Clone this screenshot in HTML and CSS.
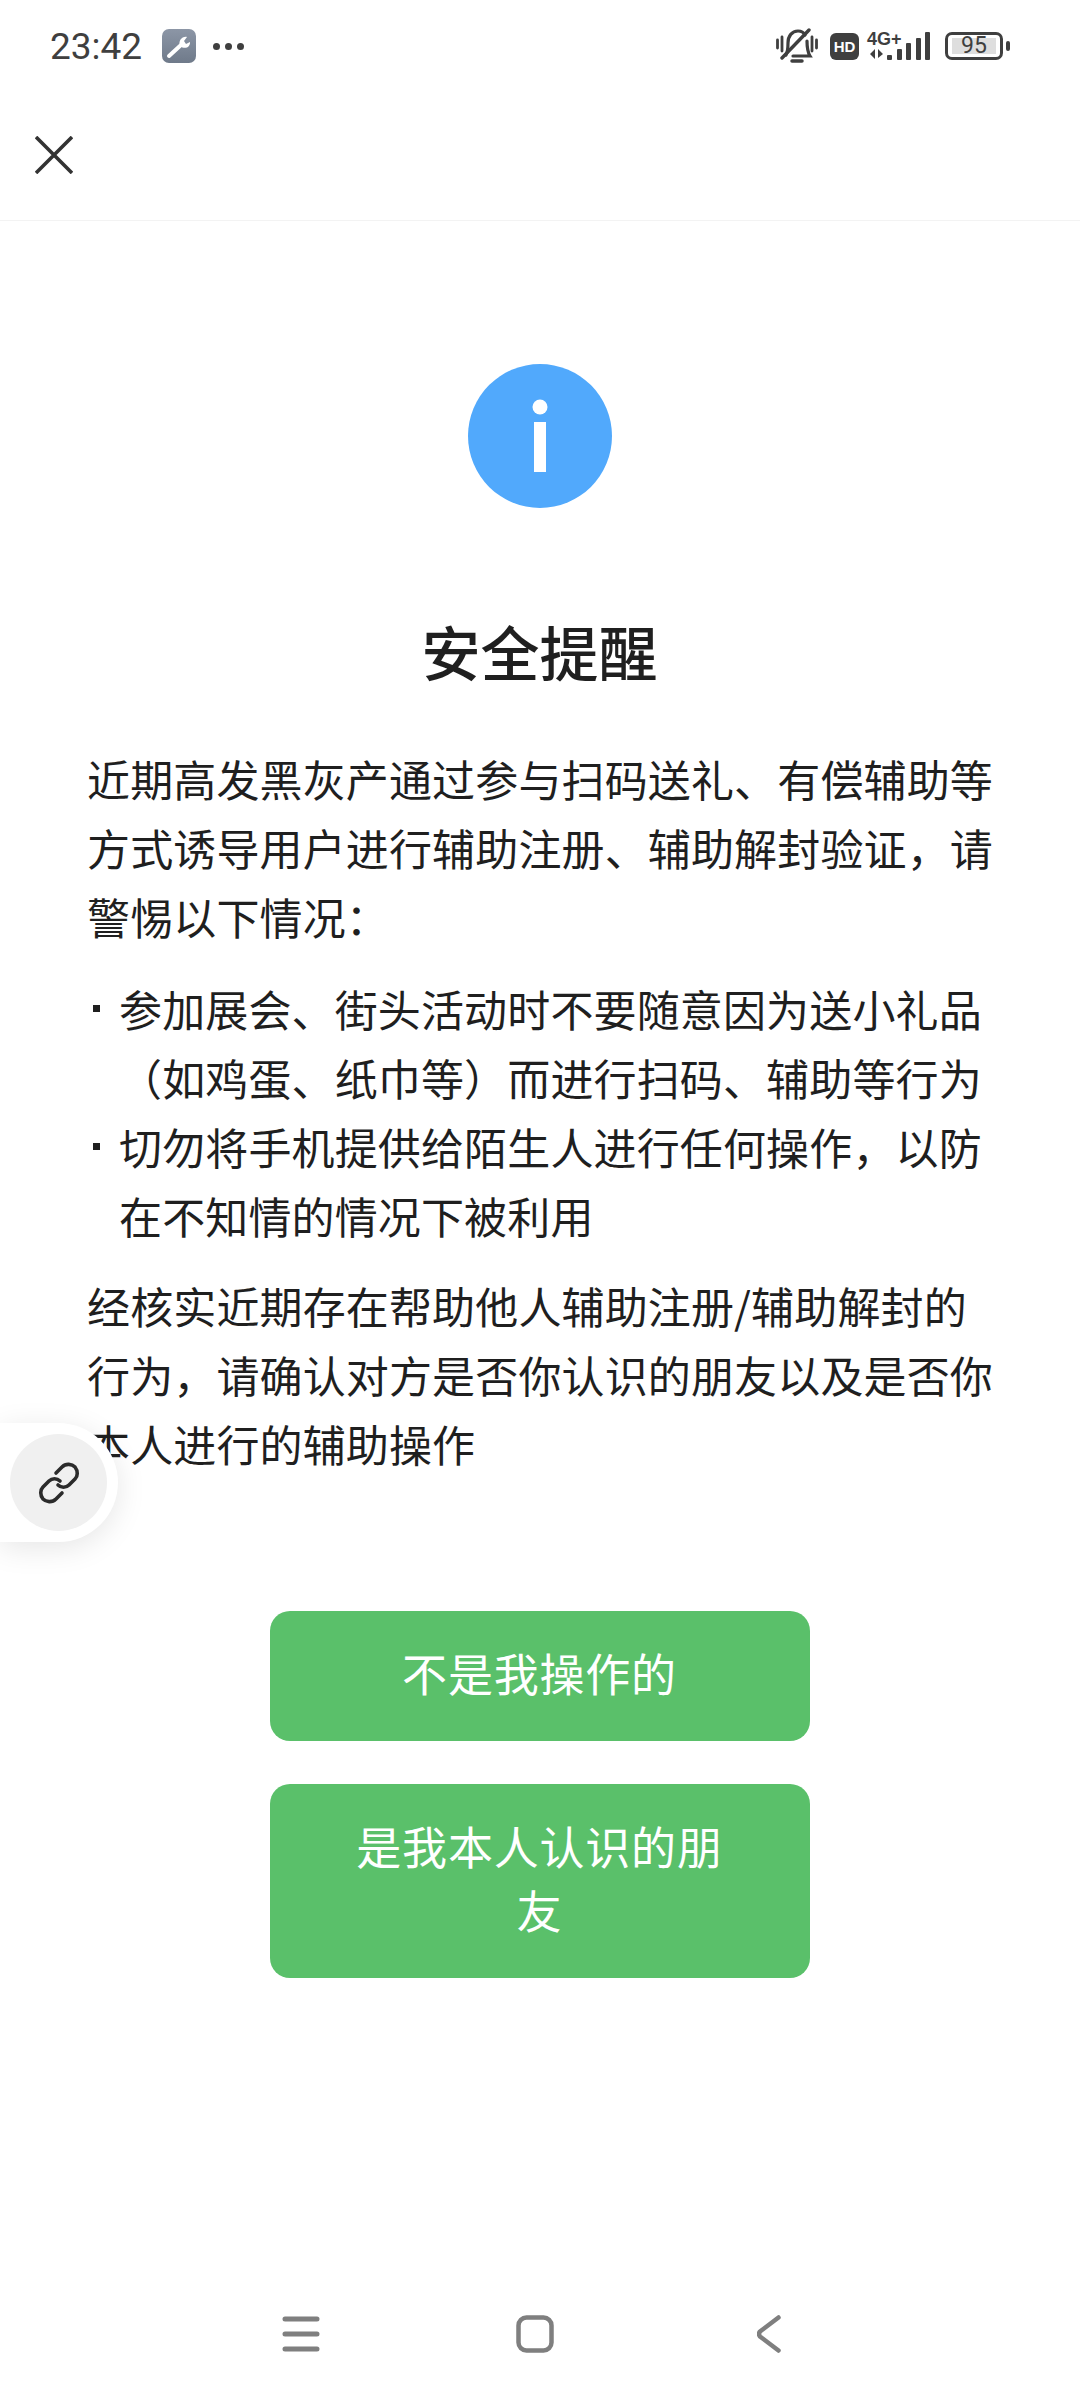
FILE: index.html
```html
<!DOCTYPE html>
<html lang="zh-CN">
<head>
    <meta charset="utf-8">
    <title>安全提醒</title>
    <link rel="stylesheet" href="styles.css">
</head>
<body>
    <div class="page">
        <div class="status-bar">
            <span class="time">23:42</span>
            <svg class="wrench" width="34" height="34" viewBox="0 0 34 34">
                <defs>
                    <linearGradient id="wrenchBg" x1="0" y1="0" x2="0" y2="1">
                        <stop offset="0" stop-color="#8c96a6"/>
                        <stop offset="1" stop-color="#6f7a8a"/>
                    </linearGradient>
                </defs>
                <rect width="34" height="34" rx="7" fill="url(#wrenchBg)"/>
                <path d="M7 27 L19 16" stroke="#fff" stroke-width="4" stroke-linecap="round"/>
                <path d="M18 17 C16 12 20 7 25 8 L22 12 L24 15 L28 13 C28.500 18 23 21 18 17 Z" fill="#fff"/>
            </svg>
            <span class="dots"><i></i><i></i><i></i></span>
            <span class="status-right">
                <svg class="bell" width="42" height="36" viewBox="0 0 42 36" fill="none" stroke="#3f3f3f" stroke-linecap="round">
                    <path d="M1.500 12 V20 M6 9 V23 M36 9 V23 M40.500 12 V20" stroke-width="2.800"/>
                    <path d="M10 27 C12 23 12 19 12 15 C12 8 16 3 22 3 C25 3 28 5 29 7 M31 13 C31 19 31 23 34 28 H17" stroke-width="3.200"/>
                    <path d="M16 33 H26" stroke-width="3.500"/>
                    <path d="M6 30 L33 2" stroke-width="3.400"/>
                </svg>
                <span class="hd">HD</span>
                <span class="network">
                    <span class="net-label">4G+</span>
                    <svg width="62" height="28" viewBox="0 0 62 28" fill="#3f3f3f">
                        <path d="M1 22 L6 17 V27 Z M9 17 L14 22 L9 26 Z"/>
                        <rect x="18" y="23" width="5" height="5" rx="1"/>
                        <rect x="28" y="17" width="5" height="11" rx="1"/>
                        <rect x="37" y="11" width="5" height="17" rx="1"/>
                        <rect x="47" y="6" width="5" height="22" rx="1"/>
                        <rect x="56" y="0" width="5" height="28" rx="1"/>
                    </svg>
                </span>
                <span class="battery"><span class="battery-level">95</span></span>
                <span class="battery-tip"></span>
            </span>
        </div>

        <div class="top-bar">
            <svg width="38" height="38" viewBox="0 0 38 38" stroke="#333" stroke-width="3.600" fill="none">
                <path d="M1 1 L37 37 M37 1 L1 37"/>
            </svg>
        </div>

        <div class="content">
            <svg class="info-icon" width="144" height="144" viewBox="0 0 144 144">
                <circle cx="72" cy="72" r="72" fill="#51a9fc"/>
                <circle cx="72" cy="43" r="7.500" fill="#fff"/>
                <rect x="66" y="58" width="12" height="50" fill="#fff"/>
            </svg>
            <h1 class="title">安全提醒</h1>
            <p class="text">近期高发黑灰产通过参与扫码送礼、有偿辅助等方式诱导用户进行辅助注册、辅助解封验证，请警惕以下情况：</p>
            <ul class="notes">
                <li>参加展会、街头活动时不要随意因为送小礼品（如鸡蛋、纸巾等）而进行扫码、辅助等行为</li>
                <li>切勿将手机提供给陌生人进行任何操作，以防在不知情的情况下被利用</li>
            </ul>
            <p class="text">经核实近期存在帮助他人辅助注册/辅助解封的行为，请确认对方是否你认识的朋友以及是否你本人进行的辅助操作</p>
            <button class="green-btn first">不是我操作的</button>
            <button class="green-btn">是我本人认识的朋友</button>
        </div>

        <div class="nav-bar">
            <span class="nav-item">
                <svg width="38" height="36" viewBox="0 0 38 36" stroke="#7f7f7f" stroke-width="5" stroke-linecap="round">
                    <path d="M3 3 H35 M3 18 H35 M3 33 H35"/>
                </svg>
            </span>
            <span class="nav-item">
                <svg width="38" height="38" viewBox="0 0 38 38" fill="none" stroke="#7f7f7f" stroke-width="4.500">
                    <rect x="2.500" y="2.500" width="33" height="33" rx="8"/>
                </svg>
            </span>
            <span class="nav-item">
                <svg width="24" height="38" viewBox="0 0 24 38" fill="none" stroke="#7f7f7f" stroke-width="4.500" stroke-linecap="round" stroke-linejoin="round">
                    <path d="M21.500 2.500 L3 16.500 Q1 19 3 21.500 L21.500 35.500"/>
                </svg>
            </span>
        </div>

        <div class="float-link">
            <span class="float-circle">
                <svg width="44" height="44" viewBox="0 0 44 44" fill="none" stroke="#2b2b2b" stroke-width="3.600" stroke-linecap="round">
                    <path d="M19 12 L25 6 C29 2 35 3 38 6 C41 10 41 15 38 18 L32 24 C29 27 24 27 21 24"/>
                    <path d="M25 32 L19 38 C15 42 9 41 6 38 C3 34 3 29 6 26 L12 20 C15 17 20 17 23 20"/>
                </svg>
            </span>
        </div>
    </div>
</body>
</html>
```

FILE: styles.css
```css
* {
    box-sizing: border-box;
}
body {
    margin: 0;
    background-color: #fff;
    font-family: "Noto Sans CJK SC", "Noto Sans", sans-serif;
    color: #1f1f1f;
}
.page {
    position: relative;
    width: 1080px;
    height: 2400px;
    display: flex;
    flex-direction: column;
    overflow: hidden;
}
.status-bar {
    height: 92px;
    padding-left: 50px;
    padding-right: 70px;
    display: flex;
    align-items: center;
}
.time {
    font-family: Roboto, sans-serif;
    font-size: 37px;
    color: #3f3f3f;
    width: 112px;
}
.dots {
    display: flex;
    gap: 5px;
    margin-left: 17px;
}
.dots i {
    width: 7px;
    height: 7px;
    border-radius: 50%;
    background-color: #3f3f3f;
}
.status-right {
    margin-left: auto;
    display: flex;
    align-items: center;
}
.hd {
    width: 29px;
    height: 27px;
    margin-left: 12px;
    border-radius: 6px;
    background-color: #3f3f3f;
    color: #fff;
    font-family: "Liberation Sans", sans-serif;
    font-size: 15px;
    font-weight: bold;
    line-height: 27px;
    text-align: center;
}
.network {
    width: 62px;
    height: 28px;
    margin-left: 10px;
    position: relative;
}
.network svg {
    display: block;
}
.net-label {
    position: absolute;
    left: -2px;
    top: -2px;
    font-family: "Liberation Sans", sans-serif;
    font-size: 18px;
    font-weight: bold;
    line-height: 18px;
    color: #3f3f3f;
}
.battery {
    width: 58px;
    height: 28px;
    margin-left: 14px;
    padding: 3px 4px;
    border: 3px solid #3f3f3f;
    border-radius: 7px;
}
.battery-level {
    display: block;
    height: 16px;
    background-color: #dedede;
    font-family: Roboto, sans-serif;
    font-size: 23px;
    line-height: 16px;
    text-align: center;
    color: #3f3f3f;
}
.battery-tip {
    width: 4px;
    height: 10px;
    margin-left: 3px;
    border-radius: 2px;
    background-color: #3f3f3f;
}
.top-bar {
    height: 129px;
    padding-left: 35px;
    padding-top: 44px;
    border-bottom: 1px solid #f3f3f3;
}
.top-bar svg {
    display: block;
}
.content {
    flex: 1;
    padding: 143px 87px 0 86px;
    display: flex;
    flex-direction: column;
    align-items: center;
}
.info-icon {
    display: block;
}
.title {
    margin: 103px 0 0;
    font-size: 59px;
    font-weight: 500;
    line-height: 80px;
    color: #1f1f1f;
}
.text {
    width: 100%;
    margin: 53px 0 0;
    padding-left: 1px;
    font-size: 43px;
    letter-spacing: 0.14px;
    line-height: 69px;
}
.notes {
    width: 100%;
    margin: 23px 0 0;
    padding: 0 0 0 1px;
    list-style: none;
    font-size: 43px;
    letter-spacing: 0.14px;
    line-height: 69px;
}
.notes li {
    position: relative;
    padding-left: 32px;
}
.notes li::before {
    content: "";
    position: absolute;
    left: 6px;
    top: 31px;
    width: 7px;
    height: 7px;
    background-color: #1f1f1f;
}
.notes + .text {
    margin-top: 21px;
}
.green-btn {
    display: block;
    width: 540px;
    padding: 30px 70px 36px;
    border: none;
    border-radius: 20px;
    background-color: #5ac06a;
    color: #fff;
    font-family: inherit;
    font-size: 45px;
    letter-spacing: 0.8px;
    line-height: 64px;
    text-align: center;
    margin-top: 43px;
}
.green-btn.first {
    margin-top: 133px;
}
.nav-bar {
    height: 132px;
    padding-left: 184px;
    display: flex;
    align-items: center;
}
.nav-item {
    width: 234px;
    display: flex;
    justify-content: center;
}
.nav-item svg {
    display: block;
}
.float-link {
    position: absolute;
    left: 0;
    top: 1423px;
    width: 118px;
    height: 119px;
    padding-left: 10px;
    display: flex;
    align-items: center;
    background-color: #fff;
    border-radius: 0 60px 60px 0;
    box-shadow: 0 6px 30px rgba(0, 0, 0, 0.1);
}
.float-circle {
    width: 97px;
    height: 97px;
    border-radius: 50%;
    background-color: #f0f0f0;
    display: flex;
    align-items: center;
    justify-content: center;
}
```
